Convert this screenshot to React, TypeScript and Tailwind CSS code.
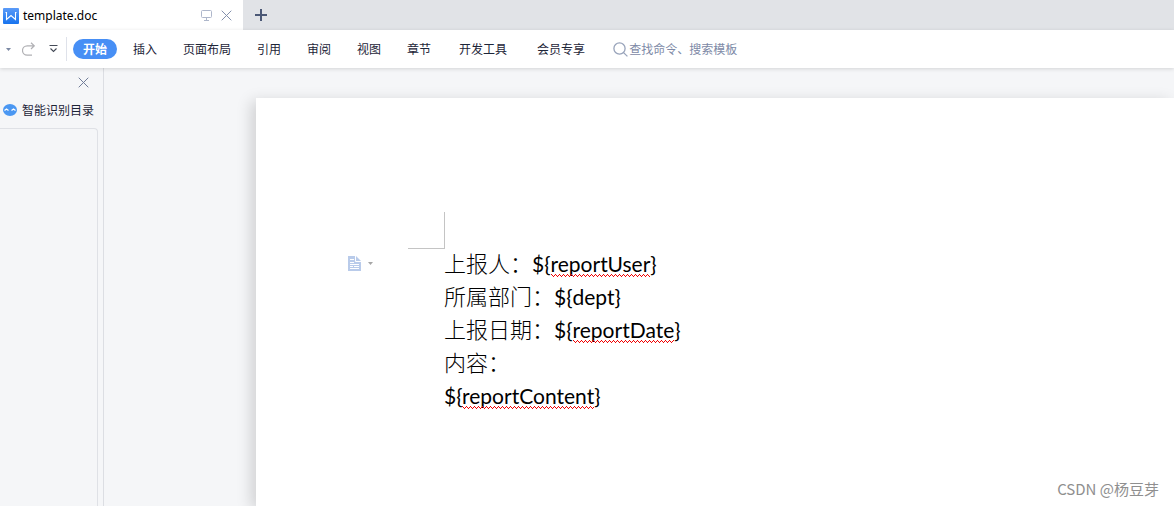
import { ReactNode } from "react";

const menuTabs = [
  { label: "插入" },
  { label: "页面布局" },
  { label: "引用" },
  { label: "审阅" },
  { label: "视图" },
  { label: "章节" },
  { label: "开发工具", wide: true },
  { label: "会员专享", wide: true },
];

function WriterLogo() {
  return (
    <svg width="16" height="16" viewBox="0 0 16 16" aria-hidden="true">
      <defs>
        <linearGradient id="logo" x1="0" y1="0" x2="0" y2="1">
          <stop offset="0" stopColor="#5b9bf8" />
          <stop offset="1" stopColor="#1673ee" />
        </linearGradient>
      </defs>
      <rect width="16" height="16" rx="1" fill="url(#logo)" />
      <path d="M2.5 4.5h1v7L8 7.5l4.5 4v-7h1" fill="none" stroke="#fff" strokeWidth="1.1" />
    </svg>
  );
}

function CloseIcon({ className }: { className: string }) {
  return (
    <svg width="11" height="11" viewBox="0 0 11 11" fill="none" stroke="currentColor" className={className}>
      <path d="M.7.7l9.6 9.6M10.3.7L.7 10.3" />
    </svg>
  );
}

function TitleBar() {
  return (
    <header className="flex h-[30px] bg-[#e1e3e7]">
      <div className="flex w-[243px] items-center bg-white pl-[3px] pr-[11px] pt-px">
        <WriterLogo />
        <span className="ml-1 font-['Noto_Sans','Noto_Sans_CJK_SC',sans-serif] text-[12px] text-black">
          template.doc
        </span>
        <button aria-label="演示" className="ml-auto text-[#aeb7cb]">
          <svg width="11" height="11" viewBox="0 0 11 11" fill="none" stroke="currentColor">
            <rect x=".5" y=".5" width="10" height="7" rx="1" />
            <path d="M5.5 7.5v3M3 10.5h5" />
          </svg>
        </button>
        <button aria-label="关闭文档" className="ml-[9px]">
          <CloseIcon className="text-[#8390ad]" />
        </button>
      </div>
      <button aria-label="新建" className="ml-3 text-[#4b5876]">
        <svg width="12" height="12" viewBox="0 0 12 12" fill="none" stroke="currentColor" strokeWidth="2">
          <path d="M6 0v12M0 6h12" />
        </svg>
      </button>
    </header>
  );
}

function MenuBar() {
  return (
    <nav className="relative z-10 flex h-[38px] items-center bg-white text-[12px] text-[#1d2538] shadow-[0_1px_4px_rgba(0,0,0,0.14)]">
      <button aria-label="撤销选项" className="ml-[6px] text-[#7b88a3]">
        <svg width="5" height="3" viewBox="0 0 5 3" fill="currentColor">
          <path d="M0 0h5L2.5 3z" />
        </svg>
      </button>
      <button aria-label="恢复" className="ml-[11px] text-[#b0b0b4]">
        <svg width="13" height="14" viewBox="0 0 13 14" fill="none" stroke="currentColor" strokeWidth="1.2">
          <path d="M9 .7l3.3 3.1L9 7M12 3.8H5.2a4.7 4.7 0 0 0 0 9.4H10" />
        </svg>
      </button>
      <button aria-label="自定义工具栏" className="ml-[14px] text-[#444a57]">
        <svg width="9" height="8" viewBox="0 0 9 8" fill="none" stroke="currentColor">
          <path d="M.5.5h8M1.5 3.5l3 3 3-3" strokeWidth="1.1" />
        </svg>
      </button>
      <span className="ml-2 h-6 w-px bg-[#dfe2ea]" />
      <button className="ml-[6px] mr-[3px] h-5 w-11 rounded-full bg-[#478ff5] font-bold text-white">开始</button>
      {menuTabs.map((tab) => (
        <button key={tab.label} className={`whitespace-nowrap ${tab.wide ? "px-[15px]" : "px-[13px]"}`}>
          {tab.label}
        </button>
      ))}
      <label className="ml-[13px] flex items-center text-[#7d89a6]">
        <svg width="15" height="15" viewBox="0 0 15 15" fill="none" stroke="#98a3ba" strokeWidth="1.3">
          <circle cx="6.5" cy="6.5" r="5.6" />
          <path d="M10.6 10.6l3.8 3.8" />
        </svg>
        <input
          aria-label="搜索"
          placeholder="查找命令、搜索模板"
          className="ml-px w-32 outline-none placeholder:text-[#7d89a6]"
        />
      </label>
    </nav>
  );
}

function Outline() {
  return (
    <aside className="flex w-[104px] shrink-0 flex-col border-r border-[#dcdee3] text-[12px] text-[#1d2538]">
      <button aria-label="关闭目录" className="ml-auto mr-[14px] mt-[9px]">
        <CloseIcon className="text-[#717d98]" />
      </button>
      <button className="mt-[13px] flex items-center whitespace-nowrap pl-[3px]">
        <svg width="14" height="12" viewBox="0 0 14 12">
          <ellipse cx="7" cy="6" rx="7" ry="6" fill="#4a97f2" />
          <path d="M1.5 6.5l2-1.5 2 1.5M8.5 6.5l2-1.5 2 1.5" fill="none" stroke="#fff" strokeWidth="1.2" />
        </svg>
        <span className="ml-[5px]">智能识别目录</span>
      </button>
      <div className="mr-[5px] mt-[9px] grow rounded-tr-sm border-r border-t border-[#dfe1e6]" />
    </aside>
  );
}

// word with a spelling mark under it
function Misspelled({ id, children }: { id: string; children: ReactNode }) {
  return (
    <span className="relative">
      {children}
      <svg className="absolute -bottom-px left-0 h-[3px] w-full" aria-hidden="true">
        <defs>
          <pattern id={id} width="4" height="3" patternUnits="userSpaceOnUse">
            <path d="M0 0h1v1H0zM1 1h1v1H1zM2 2h1v1H2zM3 1h1v1H3z" fill="#f00000" shapeRendering="crispEdges" />
          </pattern>
        </defs>
        <rect width="100%" height="3" fill={`url(#${id})`} />
      </svg>
    </span>
  );
}

function Field({ children }: { children: ReactNode }) {
  return (
    <span className="font-['Lato','Noto_Sans_CJK_SC',sans-serif] text-[21px] font-normal leading-none">{children}</span>
  );
}

function Page() {
  return (
    <main className="ml-[152px] mt-[30px] grow bg-white pt-[114px] shadow-[-5px_3px_14px_rgba(0,0,0,0.15)]">
      <div className="ml-[152px] h-[37px] w-[37px] border-b border-r border-[#c4c4c4]" />
      <div className="flex">
        <div className="flex w-[188px] shrink-0 items-start pl-[92px] pt-[7px]">
          <button aria-label="段落布局" className="flex items-center gap-[7px]">
            <svg width="13" height="15" viewBox="0 0 13 15">
              <path d="M0 0h8l5 5v10H0z" fill="#b9cbea" />
              <path
                d="M7.5 0v5.5H13M2 3.5h4M2 6.5h4M2 8.5h9M2 12.5h9M2 10.5h3M6 10.5h5"
                fill="none"
                stroke="#fff"
              />
            </svg>
            <svg width="5" height="3" viewBox="0 0 5 3" fill="#a6a6a6">
              <path d="M0 0h5L2.5 3z" />
            </svg>
          </button>
        </div>
        <article className="-mt-[3px] text-[22px] font-light leading-[33px] text-black">
          <p>
            上报人：
            <Field>
              ${"{"}
              <Misspelled id="mark-user">reportUser</Misspelled>
              {"}"}
            </Field>
          </p>
          <p>
            所属部门：<Field>${"{dept}"}</Field>
          </p>
          <p>
            上报日期：
            <Field>
              ${"{"}
              <Misspelled id="mark-date">reportDate</Misspelled>
              {"}"}
            </Field>
          </p>
          <p>内容：</p>
          <p>
            <Field>
              ${"{"}
              <Misspelled id="mark-content">reportContent</Misspelled>
              {"}"}
            </Field>
          </p>
        </article>
      </div>
    </main>
  );
}

export default function App() {
  return (
    <div
      lang="zh-CN"
      className="relative flex min-h-screen flex-col overflow-hidden bg-[#f5f6f8] font-['Noto_Sans_CJK_SC',sans-serif]"
    >
      <TitleBar />
      <MenuBar />
      <div className="flex grow">
        <Outline />
        <Page />
      </div>
      <span className="absolute bottom-[6px] right-[15px] text-[15px] leading-[22px] text-[#8f8f8f]">
        CSDN @杨豆芽
      </span>
    </div>
  );
}
